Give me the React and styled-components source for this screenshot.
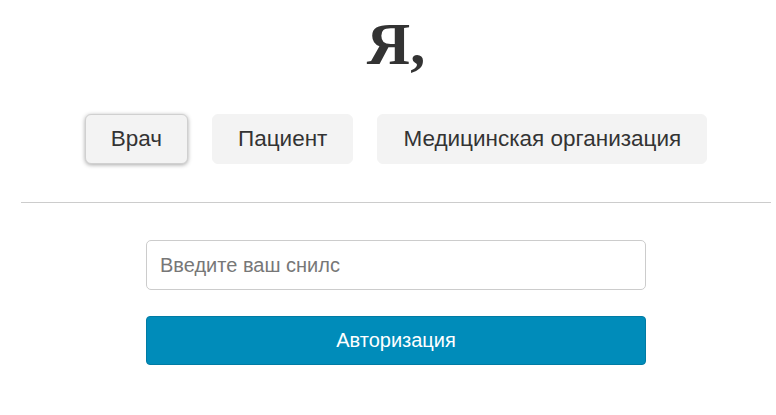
import { useState } from "react";
import styled, { createGlobalStyle } from "styled-components";

const GlobalStyle = createGlobalStyle`
  html, body {
    margin: 0;
    background: #fff;
  }
  body {
    font-family: "Liberation Sans", Arial, sans-serif;
    color: #333;
  }
`;

const roles = ["Врач", "Пациент", "Медицинская организация"];

const App = () => {
  const [active, setActive] = useState("Врач");
  const [snils, setSnils] = useState("");

  return (
    <Page>
      <GlobalStyle />
      <Title>Я,</Title>
      <RoleRow>
        {roles.map((role) => (
          <RoleButton
            key={role}
            $active={active === role}
            onClick={() => setActive(role)}
          >
            {role}
          </RoleButton>
        ))}
      </RoleRow>
      <Divider />
      <Form onSubmit={(e) => e.preventDefault()}>
        <Input
          placeholder="Введите ваш снилс"
          value={snils}
          onChange={(e) => setSnils(e.target.value)}
        />
        <Submit type="submit">Авторизация</Submit>
      </Form>
    </Page>
  );
};

const Page = styled.div`
  box-sizing: border-box;
  width: 776px;
  padding: 0 5px 0 21px;
  display: flex;
  flex-direction: column;
  align-items: center;
`;

const Title = styled.h1`
  margin: 10px 0 0;
  font-family: "Liberation Serif", "Times New Roman", serif;
  font-weight: bold;
  font-size: 60px;
  line-height: 68px;
  color: #333;
`;

const RoleRow = styled.div`
  display: flex;
  gap: 24px;
  margin-top: 36px;
`;

const RoleButton = styled.button`
  height: 50px;
  padding: 0 25px;
  font-family: "Liberation Sans", Arial, sans-serif;
  font-size: 22.5px;
  color: #333;
  background: #f3f3f3;
  border: 1px solid ${(p) => (p.$active ? "#d0d0d0" : "#f3f3f3")};
  border-radius: 6px;
  box-shadow: ${(p) => (p.$active ? "0 1px 4px rgba(0, 0, 0, 0.35)" : "none")};
  cursor: pointer;
`;

const Divider = styled.hr`
  align-self: stretch;
  margin: 38px 0 0;
  border: 0;
  border-top: 1px solid #cccccc;
`;

const Form = styled.form`
  width: 500px;
  display: flex;
  flex-direction: column;
  gap: 26px;
  margin-top: 37px;
`;

const Input = styled.input`
  box-sizing: border-box;
  height: 50px;
  padding: 0 13px;
  font-family: "Liberation Sans", Arial, sans-serif;
  font-size: 20px;
  border: 1px solid #cccccc;
  border-radius: 5px;
  outline: none;

  &::placeholder {
    color: #777;
  }
`;

const Submit = styled.button`
  height: 49px;
  font-family: "Liberation Sans", Arial, sans-serif;
  font-size: 20px;
  color: #fff;
  background: #008cba;
  border: 1px solid #007ba4;
  border-radius: 4px;
  cursor: pointer;
`;

export default App;
